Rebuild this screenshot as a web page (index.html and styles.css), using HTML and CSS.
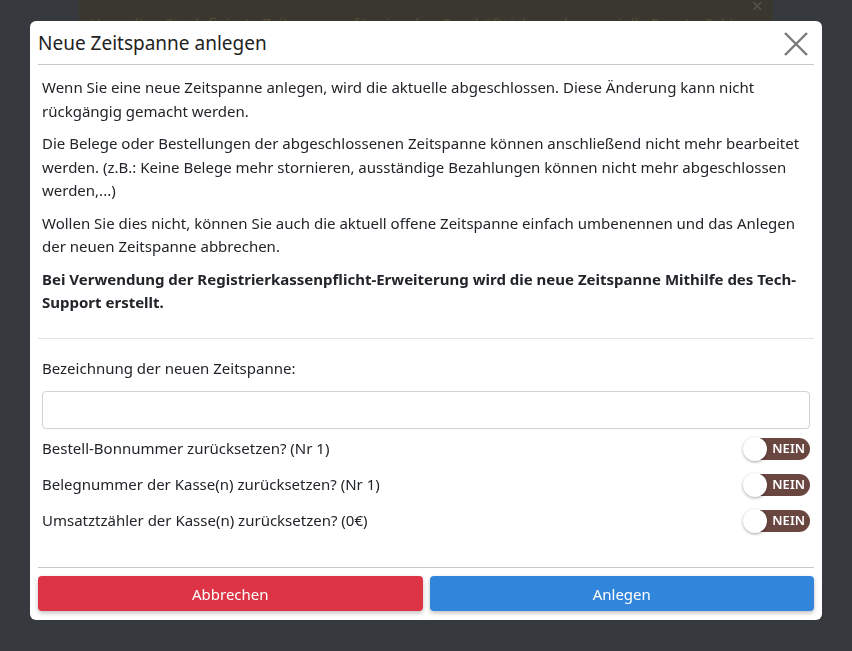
FILE: index.html
```html
<!DOCTYPE html>
<html>
    <head>
        <title>Zeitspannen</title>
        <meta name="viewport" content="width=device-width, initial-scale=1.0">
        <link rel="stylesheet" href="styles.css">
    </head>
    <body>
        <div class="page">
            <div class="alert">
                <span class="alert-text">Verwalten Sie definierte Zeitspannen für einzelne Geschäftsjahre oder spezielle Events. Schließen Sie eine Zeitspanne ab, um sie zu archivieren.</span>
                <span class="alert-close">×</span>
            </div>
        </div>

        <div class="overlay">
            <div class="modal">
                <div class="modal-header">
                    <h5>Neue Zeitspanne anlegen</h5>
                    <button class="close" aria-label="Schließen">
                        <svg width="26" height="26" viewBox="0 0 26 26">
                            <path d="M2 2 L24 24 M24 2 L2 24" stroke="#7a7a7a" stroke-width="2.4" fill="none"/>
                        </svg>
                    </button>
                </div>
                <div class="modal-body">
                    <p>Wenn Sie eine neue Zeitspanne anlegen, wird die aktuelle abgeschlossen. Diese Änderung kann nicht rückgängig gemacht werden.</p>
                    <p>Die Belege oder Bestellungen der abgeschlossenen Zeitspanne können anschließend nicht mehr bearbeitet werden. (z.B.: Keine Belege mehr stornieren, ausständige Bezahlungen können nicht mehr abgeschlossen werden,...)</p>
                    <p>Wollen Sie dies nicht, können Sie auch die aktuell offene Zeitspanne einfach umbenennen und das Anlegen der neuen Zeitspanne abbrechen.</p>
                    <p class="strong">Bei Verwendung der Registrierkassenpflicht-Erweiterung wird die neue Zeitspanne Mithilfe des Tech-Support erstellt.</p>
                    <hr>
                    <label class="field-label" for="name">Bezeichnung der neuen Zeitspanne:</label>
                    <input id="name" class="field" type="text">
                    <div class="switch-row">
                        <span>Bestell-Bonnummer zurücksetzen? (Nr 1)</span>
                        <span class="switch"><span class="knob"></span>NEIN</span>
                    </div>
                    <div class="switch-row">
                        <span>Belegnummer der Kasse(n) zurücksetzen? (Nr 1)</span>
                        <span class="switch"><span class="knob"></span>NEIN</span>
                    </div>
                    <div class="switch-row">
                        <span>Umsatztzähler der Kasse(n) zurücksetzen? (0€)</span>
                        <span class="switch"><span class="knob"></span>NEIN</span>
                    </div>
                </div>
                <div class="modal-footer">
                    <button class="btn btn-cancel">Abbrechen</button>
                    <button class="btn btn-create">Anlegen</button>
                </div>
            </div>
        </div>
    </body>
</html>
```

FILE: styles.css
```css
* {
    box-sizing: border-box;
}

body {
    margin: 0;
    background: #36393d;
    font-family: "Noto Sans", sans-serif;
    color: #212529;
    height: 651px;
    overflow: hidden;
}

.page {
    padding: 0 79px;
}

.alert {
    display: flex;
    justify-content: space-between;
    background: #3a372f;
    color: #564f35;
    height: 50px;
    padding: 0 10px 0 12px;
    font-size: 15px;
    overflow: hidden;
}

.alert-text {
    white-space: nowrap;
    overflow: hidden;
    padding-top: 13px;
    margin-right: 20px;
}

.alert-close {
    font-size: 20px;
    line-height: 12px;
    color: #55524b;
}

.overlay {
    position: fixed;
    top: 0;
    left: 0;
    right: 0;
    bottom: 0;
    display: flex;
    justify-content: center;
    align-items: flex-start;
    padding-top: 21px;
}

.modal {
    width: 792px;
    background: #fff;
    border-radius: 6px;
    padding: 0 8px 9px 8px;
}

.modal-header {
    display: flex;
    align-items: center;
    justify-content: space-between;
    height: 44px;
    border-bottom: 1px solid #c8c8c8;
}

.modal-header h5 {
    margin: 0;
    font-size: 19px;
    font-weight: 400;
    color: #222;
}

.close {
    border: 0;
    background: none;
    padding: 0;
    margin-right: 5px;
    margin-top: 6px;
    cursor: pointer;
}

.modal-body {
    padding: 11px 4px 0 4px;
    font-size: 15px;
    line-height: 23.5px;
}

.modal-body p {
    margin: 0 0 9px 0;
}

.modal-body .strong {
    font-weight: 700;
    margin-bottom: 0;
}

.modal-body hr {
    border: 0;
    border-top: 1px solid #e3e3e3;
    margin: 23px -4px 18px -4px;
}

.field-label {
    display: block;
    margin-bottom: 11px;
}

.field {
    display: block;
    width: 100%;
    height: 38px;
    border: 1px solid #cfd3d7;
    border-radius: 4px;
    margin-bottom: 2px;
}

.switch-row {
    display: flex;
    justify-content: space-between;
    align-items: center;
    height: 36px;
}

.switch {
    display: flex;
    align-items: center;
    justify-content: flex-end;
    width: 66px;
    height: 22px;
    padding-right: 5px;
    border-radius: 11px;
    background: #6a4641;
    color: #fff;
    font-size: 13px;
    font-weight: 600;
    position: relative;
}

.knob {
    position: absolute;
    left: -1px;
    top: -1px;
    width: 24px;
    height: 24px;
    border-radius: 50%;
    background: #fff;
    box-shadow: 0 1px 3px rgba(0, 0, 0, 0.35);
}

.modal-footer {
    display: flex;
    gap: 7px;
    border-top: 1px solid #c8c8c8;
    margin-top: 28px;
    padding-top: 8px;
}

.btn {
    flex: 1;
    height: 35px;
    border: 0;
    border-radius: 4px;
    color: #fff;
    font-family: "Noto Sans", sans-serif;
    font-size: 15px;
    box-shadow: 0 2px 4px rgba(0, 0, 0, 0.25);
    cursor: pointer;
}

.btn-cancel {
    background: #dc3445;
}

.btn-create {
    background: #3186dc;
}
```
